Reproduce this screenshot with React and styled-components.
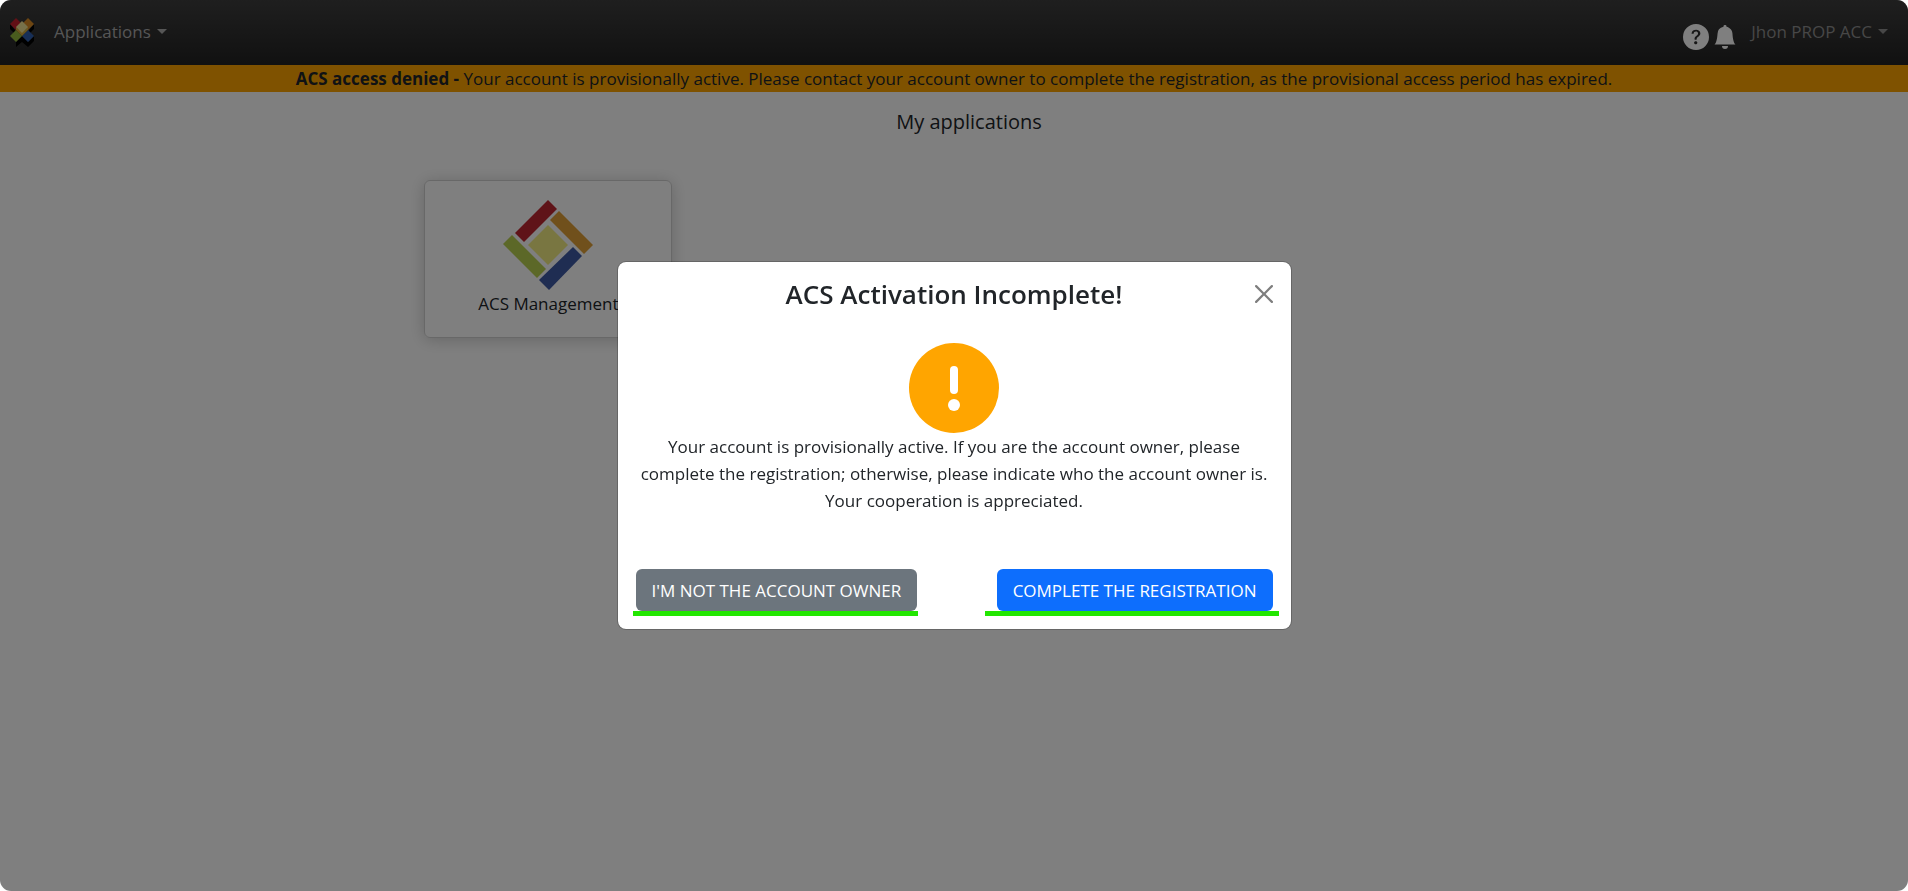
import React, { useState } from 'react'
import styled, { createGlobalStyle } from 'styled-components'
import { BsQuestionCircleFill, BsBellFill } from 'react-icons/bs'


function App() {
  const [open, setOpen] = useState(true)

  return (
    <Page>
      <GlobalStyle />
      <Navbar>
        <NavGroup>
          <Brand href="#" aria-label="Home">
            <BrandLogo />
          </Brand>
          <NavButton type="button">
            Applications
            <Caret />
          </NavButton>
        </NavGroup>
        <NavGroup>
          <NavIcons>
            <IconButton type="button" aria-label="Help">
              <BsQuestionCircleFill size={26} />
            </IconButton>
            <IconButton type="button" aria-label="Notifications">
              <BsBellFill size={24} />
            </IconButton>
          </NavIcons>
          <NavButton type="button" $dim>
            Jhon PROP ACC
            <Caret />
          </NavButton>
        </NavGroup>
      </Navbar>
      <Banner>
        <strong>ACS access denied - </strong>
        Your account is provisionally active. Please contact your account owner to complete the registration, as the provisional access period has expired.
      </Banner>
      <Main>
        <PageTitle>My applications</PageTitle>
        <Cards>
          <Card href="#">
            <AcsLogo />
            ACS Management
          </Card>
        </Cards>
      </Main>

      {open && (
        <Backdrop>
          <Modal role="dialog" aria-modal="true" aria-labelledby="modal-title">
            <ModalHeader>
              <ModalTitle id="modal-title">ACS Activation Incomplete!</ModalTitle>
              <CloseButton type="button" aria-label="Close" onClick={() => setOpen(false)}>
                <CloseIcon />
              </CloseButton>
            </ModalHeader>
            <ModalBody>
              <WarningIcon />
              <Message>
                Your account is provisionally active. If you are the account owner, please complete the registration; otherwise, please indicate who the account owner is. Your cooperation is appreciated.
              </Message>
            </ModalBody>
            <ModalFooter>
              <Action>
                <ActionButton type="button">I'M NOT THE ACCOUNT OWNER</ActionButton>
                <Underline $left={3} $right={1} />
              </Action>
              <Action>
                <ActionButton type="button" $primary>COMPLETE THE REGISTRATION</ActionButton>
                <Underline $left={12} $right={6} />
              </Action>
            </ModalFooter>
          </Modal>
        </Backdrop>
      )}
    </Page>
  )
}

export default App


function BrandLogo() {
  return (
    <svg width="26" height="30" viewBox="0 0 26 30" aria-hidden="true">
      <path d="M1 6v5l5 5v-4zM25 6v5l-5 5v-4z" fill="#000" />
      <path d="M1 18l6 6 6-6 6 6 6-6v5l-6 6-6-5-6 5v-5z" fill="#000" />
      <path d="M7 0l6 6-6 6-6-6z" fill="#c4202c" />
      <path d="M19 0l6 6-6 6-6-6z" fill="#d98a24" />
      <path d="M7 12l6 6-6 6-6-6z" fill="#93b83c" />
      <path d="M19 12l6 6-6 6-6-6z" fill="#2f5fae" />
      <path d="M7 9l6 5 6-5v3l-6 6-6-6z" fill="#d9ae3c" />
      <path d="M13 3l6 6-6 6-6-6z" fill="#efe294" />
    </svg>
  )
}

function AcsLogo() {
  return (
    <svg width="90" height="90" viewBox="0 0 90 90" aria-hidden="true">
      <path d="M45 0l9 9-33 33-9-9z" fill="#be2630" />
      <path d="M56 11l34 34-9 9-34-34z" fill="#e0a038" />
      <path d="M9 35l34 34-9 9L0 44z" fill="#b9d050" />
      <path d="M70 47l9 9-33 34-10-10z" fill="#3e5aa4" />
      <path d="M45 25l20 20-20 20-20-20z" fill="#f3ec82" />
    </svg>
  )
}

function CloseIcon() {
  return (
    <svg width="18" height="18" viewBox="0 0 16 16" aria-hidden="true">
      <path
        fill="currentColor"
        d="M.293.293a1 1 0 0 1 1.414 0L8 6.586 14.293.293a1 1 0 1 1 1.414 1.414L9.414 8l6.293 6.293a1 1 0 0 1-1.414 1.414L8 9.414l-6.293 6.293a1 1 0 0 1-1.414-1.414L6.586 8 .293 1.707a1 1 0 0 1 0-1.414z"
      />
    </svg>
  )
}

function WarningIcon() {
  return (
    <svg width="90" height="90" viewBox="0 0 90 90" aria-hidden="true">
      <circle cx="45" cy="45" r="45" fill="#ffa500" />
      <rect x="41" y="23" width="8" height="28" rx="4" fill="#fff" />
      <circle cx="45" cy="62" r="6" fill="#fff" />
    </svg>
  )
}


const GlobalStyle = createGlobalStyle`
* {
  box-sizing: border-box;
}

body {
  margin: 0;
  background: #fff;
  color: #212529;
  font-family: "Open Sans", "Noto Sans", sans-serif;
  font-size: 17px;
  line-height: 27px;
}

button {
  font: inherit;
  cursor: pointer;
}
`

const Page = styled.div`
min-height: 100vh;
border-radius: 11px;
overflow: hidden;
`

const Navbar = styled.nav`
height: 65px;
padding: 0 20px 0 9px;
display: flex;
justify-content: space-between;
align-items: center;
background: linear-gradient(#3e3e3e, #222);
`

const NavGroup = styled.div`
display: flex;
align-items: center;
`

const Brand = styled.a`
display: flex;
margin-right: 19px;
`

const NavButton = styled.button`
display: flex;
align-items: center;
gap: 6px;
padding: 0 0 2px;
border: 0;
background: none;
color: ${({ $dim }) => ($dim ? '#8e8e8e' : '#acacac')};
`

const Caret = styled.span`
border-top: 5px solid;
border-left: 5px solid transparent;
border-right: 5px solid transparent;
`

const NavIcons = styled.div`
display: flex;
align-items: center;
gap: 4px;
margin-right: 14px;
padding-top: 8px;
`

const IconButton = styled.button`
display: flex;
padding: 0;
border: 0;
background: none;
color: #fff;
`

const Banner = styled.div`
background: #ffa500;
text-align: center;
`

const Main = styled.main`
padding: 16px 0 0 30px;
`

const PageTitle = styled.h1`
margin: 0;
font-size: 20px;
line-height: 28px;
font-weight: 400;
text-align: center;
`

const Cards = styled.div`
width: 58%;
margin: 44px auto 0;
display: flex;
flex-wrap: wrap;
`

const Card = styled.a`
width: 248px;
height: 158px;
padding-bottom: 2px;
display: flex;
flex-direction: column;
align-items: center;
justify-content: center;
border: 1px solid #d0d0d0;
border-radius: 6px;
box-shadow: 0 2px 16px rgba(0, 0, 0, 0.2);
color: #212529;
text-decoration: none;
`

const Backdrop = styled.div`
position: fixed;
inset: 0;
display: flex;
justify-content: center;
align-items: center;
border-radius: 11px;
background: rgba(0, 0, 0, 0.5);
`

const Modal = styled.div`
width: 100%;
max-width: 675px;
border: 1px solid rgba(0, 0, 0, 0.2);
border-radius: 9px;
background: #fff;
background-clip: padding-box;
`

const ModalHeader = styled.div`
padding: 17px 18px;
display: grid;
grid-template-columns: 18px 1fr 18px;
align-items: center;
`

const ModalTitle = styled.h2`
grid-column: 2;
margin: 0;
font-size: 26px;
line-height: 30px;
font-weight: 600;
text-align: center;
`

const CloseButton = styled.button`
display: flex;
padding: 0;
border: 0;
background: none;
color: #000;
opacity: 0.5;
`

const ModalBody = styled.div`
padding: 17px 18px;
display: flex;
flex-direction: column;
align-items: center;
`

const Message = styled.p`
margin: 0;
text-align: center;
`

const ModalFooter = styled.div`
padding: 38px 18px 18px;
display: flex;
justify-content: space-between;
`

const Action = styled.div`
position: relative;
`

const ActionButton = styled.button`
height: 42px;
padding: 0 16px;
border: 0;
border-radius: 6px;
background: ${({ $primary }) => ($primary ? '#0d6efd' : '#6c757d')};
color: #fff;
`

/* green marker drawn over the bottom edge of an action */
const Underline = styled.span`
position: absolute;
left: ${({ $left }) => -$left}px;
right: ${({ $right }) => -$right}px;
bottom: -5px;
height: 5px;
background: #22e600;
`
